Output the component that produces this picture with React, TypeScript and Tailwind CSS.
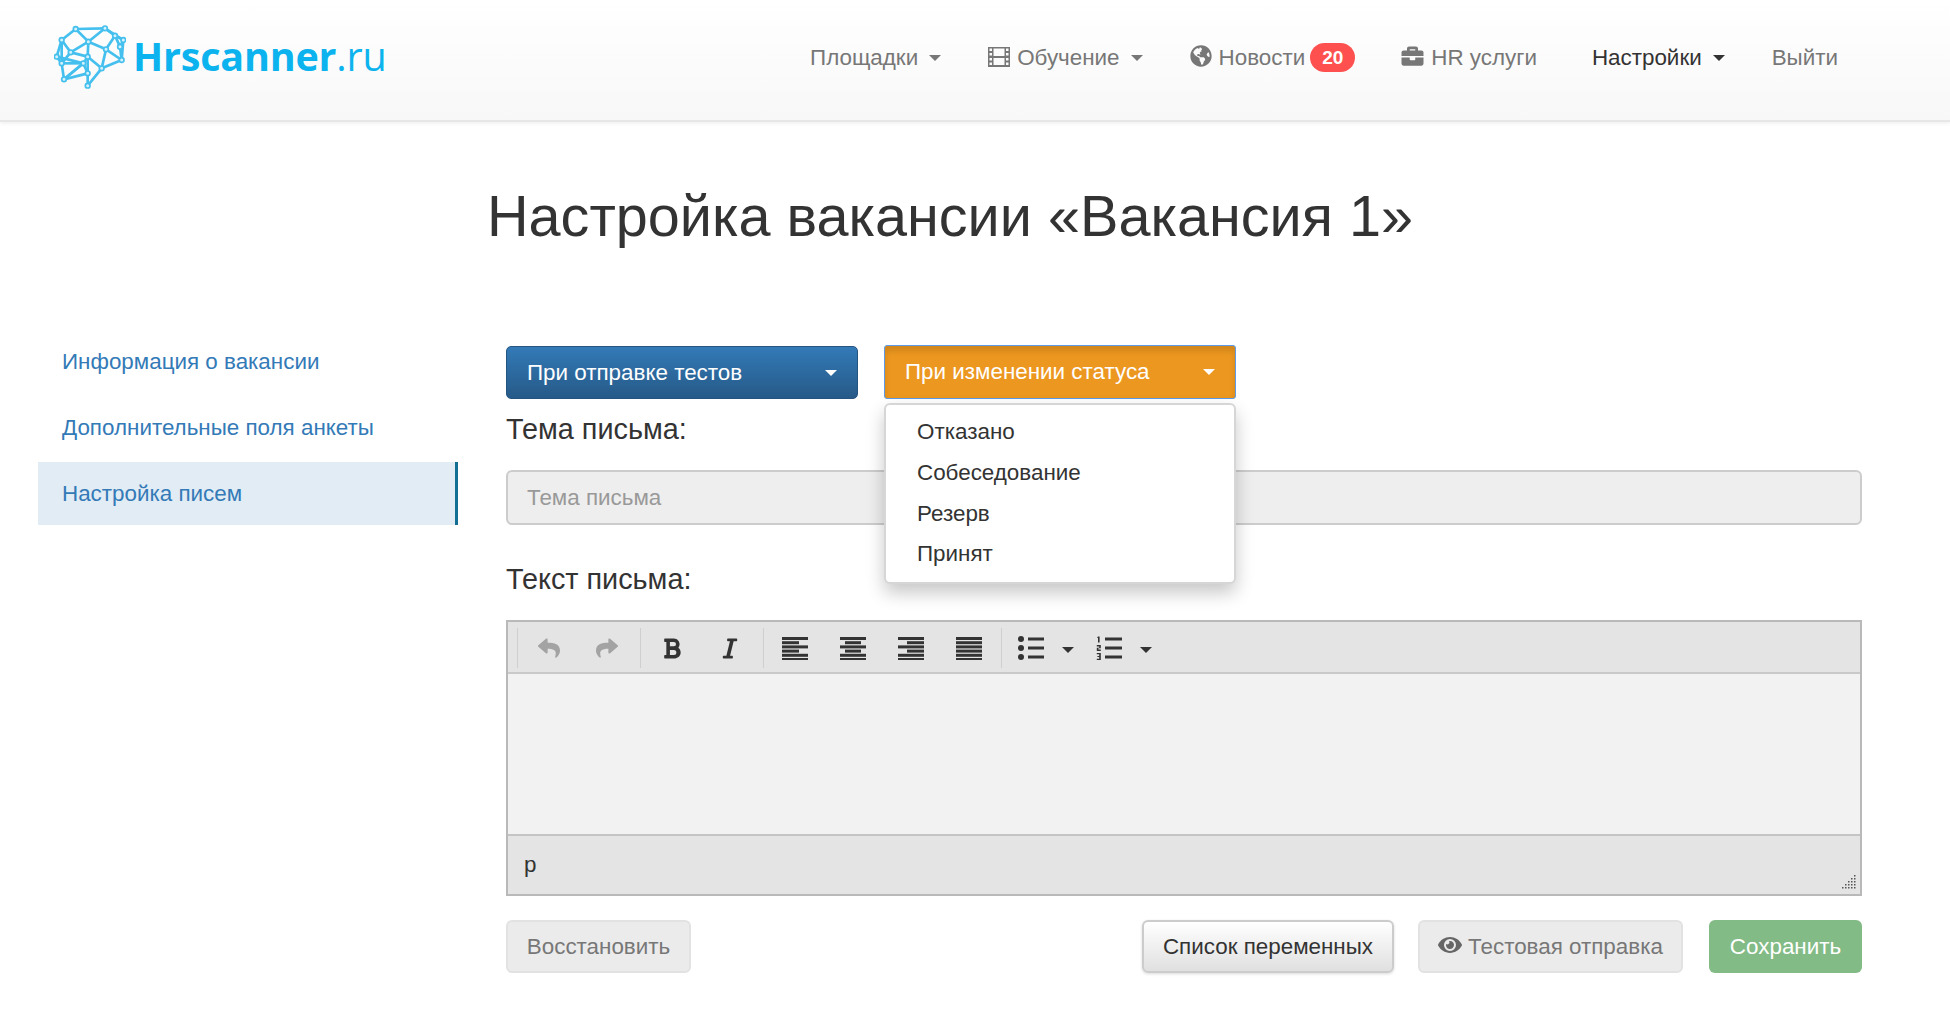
import { FaBold, FaBriefcase, FaEye, FaGlobeAmericas, FaItalic, FaReply, FaShare } from 'react-icons/fa';

const font = "font-['Liberation_Sans',Arial,sans-serif]";

const brainNodes: [number, number][] = [
  [107, 52], [195, 50], [250, 85], [65, 85], [145, 90], [225, 72], [198, 113], [92, 122], [50, 135],
  [143, 135], [245, 145], [65, 155], [130, 155], [185, 170], [72, 203], [143, 185], [143, 222], [240, 105]
];

const brainEdges: [number, number][] = [
  [0, 1], [0, 3], [0, 4], [1, 4], [1, 5], [5, 2], [1, 2], [2, 17], [17, 10], [5, 6], [4, 6], [6, 10], [6, 13],
  [4, 9], [4, 7], [3, 7], [3, 8], [8, 11], [7, 11], [7, 9], [9, 12], [11, 12], [8, 12], [11, 14], [12, 14],
  [14, 15], [12, 15], [9, 15], [9, 13], [13, 10], [13, 16], [15, 16], [5, 17], [2, 10], [3, 11], [14, 12]
];

const Logo = () => (
  <div className="mb-[3px] flex items-center">
    <svg viewBox="42 40 216 192" className="h-[64px] w-[72px]" fill="none">
      {brainEdges.map(([a, b]) => (
        <line
          key={`${a}-${b}`}
          x1={brainNodes[a][0]}
          y1={brainNodes[a][1]}
          x2={brainNodes[b][0]}
          y2={brainNodes[b][1]}
          stroke="#45c0ee"
          strokeWidth="8"
        />
      ))}
      {brainNodes.map(([x, y]) => (
        <circle key={`${x}-${y}`} cx={x} cy={y} r="7" fill="#d5f1fb" stroke="#45c0ee" strokeWidth="5" />
      ))}
    </svg>
    <span className="ml-[7px] font-['Open_Sans',sans-serif] text-[39.5px] leading-none tracking-[-0.2px] text-[#0cb3ee]">
      <span className="font-bold">Hrscanner</span>.ru
    </span>
  </div>
);

const Caret = ({ className }: { className: string }) => (
  <span className={`inline-block h-0 w-0 border-x-[6px] border-t-[6px] border-x-transparent ${className}`} />
);

const FilmIcon = () => (
  <svg viewBox="0 0 22 20" className="mb-[2px] h-[20px] w-[22px] fill-[#777]">
    <path
      fillRule="evenodd"
      d="M0 0h22v20H0zM1.5 1.5v2.5h2.5V1.5zM18 1.5v2.5h2.5V1.5zM1.5 6v2.5h2.5V6zM18 6v2.5h2.5V6zM1.5 11v2.5h2.5V11zM18 11v2.5h2.5V11zM1.5 15.5V18h2.5v-2.5zM18 15.5V18h2.5v-2.5zM5.5 1.5V9h11V1.5zM5.5 11v7h11v-7z"
    />
  </svg>
);

const AlignIcon = ({ rows }: { rows: [number, number][] }) => (
  <svg viewBox="0 0 26 24" className="h-[24px] w-[26px] fill-[#333]">
    {rows.map(([x, w], i) => (
      <rect key={i} x={x} y={i * 4.2 + 1} width={w} height="3" />
    ))}
  </svg>
);

const BulletIcon = () => (
  <svg viewBox="0 0 26 24" className="h-[24px] w-[26px] fill-[#333]">
    <circle cx="3" cy="3" r="3" />
    <circle cx="3" cy="12" r="3" />
    <circle cx="3" cy="21" r="3" />
    <rect x="10" y="1.5" width="16" height="3" />
    <rect x="10" y="10.5" width="16" height="3" />
    <rect x="10" y="19.5" width="16" height="3" />
  </svg>
);

const NumberedIcon = () => (
  <svg viewBox="0 0 26 24" className="h-[24px] w-[26px] fill-[#333]">
    <path d="M2 0.5h1.6v6H2V2H1zM0.8 9h4v3.2H2.4v1.4h2.4V15H0.8v-3.2h2.4v-1.4H0.8zM0.8 17h4v7h-4v-1.3h2.4v-1.6H1.4v-1.2h1.8v-1.6H0.8z" />
    <rect x="9" y="1.5" width="17" height="3" />
    <rect x="9" y="10.5" width="17" height="3" />
    <rect x="9" y="19.5" width="17" height="3" />
  </svg>
);

const Separator = () => <div className="h-[40px] w-px bg-[#cfcfcf]" />;

const ToolButton = ({ children }: { children: React.ReactNode }) => (
  <div className="flex w-[58px] items-center justify-center">{children}</div>
);

const ResizeHandle = () => (
  <svg viewBox="0 0 16 16" className="absolute right-[4px] bottom-[4px] h-[16px] w-[16px] fill-[#555]">
    {[[14, 1], [14, 4], [11, 4], [14, 7], [11, 7], [8, 7], [14, 10], [11, 10], [8, 10], [5, 10], [14, 13], [11, 13], [8, 13], [5, 13], [2, 13]].map(([x, y]) => (
      <rect key={`${x}-${y}`} x={x} y={y} width="1.5" height="1.5" />
    ))}
  </svg>
);

const Navbar = () => (
  <header className="flex h-[122px] items-center justify-between border-b-2 border-[#e7e7e7] bg-gradient-to-b from-white to-[#f8f8f8] pr-[112px] pb-[4px] pl-[54px] shadow-[0_1px_4px_rgba(0,0,0,0.08)]">
    <Logo />
    <nav className="flex items-center text-[22.4px] text-[#777]">
      <span className="flex items-center">
        Площадки
        <Caret className="ml-[11px] border-t-[#777]" />
      </span>
      <span className="ml-[47px] flex items-center">
        <FilmIcon />
        <span className="ml-[7px]">Обучение</span>
        <Caret className="ml-[11px] border-t-[#777]" />
      </span>
      <span className="ml-[47px] flex items-center">
        <FaGlobeAmericas className="mb-[4px] h-[22px] w-[22px]" />
        <span className="ml-[7px]">Новости</span>
        <span className="ml-[5px] flex h-[29px] w-[45px] items-center justify-center rounded-full bg-[#ff5050] text-[19px] font-bold text-white">
          20
        </span>
      </span>
      <span className="ml-[46px] flex items-center">
        <FaBriefcase className="mb-[4px] h-[22px] w-[23px]" />
        <span className="ml-[7px]">HR услуги</span>
      </span>
      <span className="ml-[55px] flex items-center text-[#333]">
        Настройки
        <Caret className="ml-[11px] border-t-[#333]" />
      </span>
      <span className="ml-[47px]">Выйти</span>
    </nav>
  </header>
);

const Sidebar = () => (
  <aside className="ml-[38px] flex w-[420px] shrink-0 flex-col gap-[3px] text-[22.4px] text-[#337ab7]">
    <div className="flex h-[63px] items-center pl-[24px]">Информация о вакансии</div>
    <div className="flex h-[63px] items-center pl-[24px]">Дополнительные поля анкеты</div>
    <div className="flex h-[63px] items-center border-r-[3px] border-[#126f93] bg-[#e2ecf5] pl-[24px]">Настройка писем</div>
  </aside>
);

const Editor = () => (
  <div className="mt-[25px] flex h-[276px] flex-col border-2 border-[#b9b9b9] bg-[#e4e4e4]">
    <div className="flex h-[52px] shrink-0 items-center border-b-2 border-[#c9c9c9] pt-[2px] pl-[9px]">
      <Separator />
      <div className="ml-[2px] flex">
        <ToolButton><FaReply className="h-[22px] w-[24px] text-[#a3a3a3]" /></ToolButton>
        <ToolButton><FaShare className="h-[22px] w-[24px] text-[#a3a3a3]" /></ToolButton>
      </div>
      <div className="ml-[4px]"><Separator /></div>
      <div className="ml-[2px] flex">
        <ToolButton><FaBold className="h-[23px] w-[20px] text-[#333]" /></ToolButton>
        <ToolButton><FaItalic className="h-[23px] w-[20px] text-[#333]" /></ToolButton>
      </div>
      <div className="ml-[4px]"><Separator /></div>
      <div className="ml-[2px] flex">
        <ToolButton><AlignIcon rows={[[0, 26], [0, 17], [0, 26], [0, 17], [0, 26], [0, 26]]} /></ToolButton>
        <ToolButton><AlignIcon rows={[[0, 26], [5, 16], [0, 26], [5, 16], [0, 26], [0, 26]]} /></ToolButton>
        <ToolButton><AlignIcon rows={[[0, 26], [9, 17], [0, 26], [9, 17], [0, 26], [0, 26]]} /></ToolButton>
        <ToolButton><AlignIcon rows={[[0, 26], [0, 26], [0, 26], [0, 26], [0, 26], [0, 26]]} /></ToolButton>
      </div>
      <div className="ml-[3px]"><Separator /></div>
      <div className="ml-[16px]"><BulletIcon /></div>
      <Caret className="mt-[4px] ml-[18px] border-t-[#333]" />
      <div className="ml-[22px]"><NumberedIcon /></div>
      <Caret className="mt-[4px] ml-[18px] border-t-[#333]" />
    </div>
    <div className="h-[160px] shrink-0 bg-[#f2f2f2]" />
    <div className="relative flex flex-1 items-center border-t-2 border-[#c4c4c4] pl-[16px] text-[22.4px] text-[#333]">
      p
      <ResizeHandle />
    </div>
  </div>
);

const StatusDropdown = () => (
  <div className="absolute top-[73px] left-[378px] z-10 flex h-[181px] w-[352px] flex-col justify-center rounded-[6px] border-2 border-[#d6d6d6] bg-white pl-[31px] text-[22.4px] leading-[40.7px] text-[#333] shadow-[0_9px_18px_rgba(0,0,0,0.22)]">
    <div>Отказано</div>
    <div>Собеседование</div>
    <div>Резерв</div>
    <div>Принят</div>
  </div>
);

const Content = () => (
  <section className="relative ml-[48px] w-[1356px] pt-[16px] text-[#333]">
    <div className="flex items-start">
      <div className="flex h-[53px] w-[352px] items-center justify-between rounded-[5px] border border-[#245580] bg-gradient-to-b from-[#337ab7] to-[#265a88] px-[20px] text-[22.4px] text-white">
        При отправке тестов
        <Caret className="border-t-white" />
      </div>
      <div className="-mt-px ml-[26px] flex h-[54px] w-[352px] items-center justify-between rounded-[3px] border border-[#5b9bea] bg-[#ec971f] px-[20px] text-[22.4px] text-white shadow-[inset_0_5px_6px_rgba(0,0,0,0.12)]">
        При изменении статуса
        <Caret className="border-t-white" />
      </div>
    </div>
    <StatusDropdown />
    <div className="mt-[14px] text-[28.8px] leading-[32px]">Тема письма:</div>
    <div className="mt-[25px] flex h-[55px] items-center rounded-[6px] border-2 border-[#ccc] bg-[#eee] pl-[19px] text-[22.4px] text-[#999]">
      Тема письма
    </div>
    <div className="mt-[38px] text-[28.8px] leading-[32px]">Текст письма:</div>
    <Editor />
    <div className="mt-[24px] flex h-[53px] text-[22.4px]">
      <div className="flex w-[185px] items-center justify-center rounded-[6px] border-2 border-[#e2e2e2] bg-[#ebebeb] text-[#777]">
        Восстановить
      </div>
      <div className="ml-auto flex w-[252px] items-center justify-center rounded-[6px] border-2 border-[#ccc] bg-gradient-to-b from-white to-[#e0e0e0] text-[#333] shadow-[0_1px_3px_rgba(0,0,0,0.15)]">
        Список переменных
      </div>
      <div className="ml-[24px] flex w-[265px] items-center justify-center rounded-[6px] border-2 border-[#e2e2e2] bg-[#ebebeb] text-[#777]">
        <FaEye className="mr-[6px] mb-[4px] h-[22px] w-[24px] text-[#666]" />
        Тестовая отправка
      </div>
      <div className="ml-[26px] flex w-[153px] items-center justify-center rounded-[6px] bg-[#82bb85] text-white">
        Сохранить
      </div>
    </div>
  </section>
);

export default function App() {
  return (
    <div className={`min-h-[1012px] w-[1950px] overflow-hidden bg-white ${font}`}>
      <Navbar />
      <h1 className="mt-[58px] ml-[487px] text-[57.6px] leading-[72px] text-[#333]">Настройка вакансии «Вакансия 1»</h1>
      <main className="mt-[78px] flex">
        <Sidebar />
        <Content />
      </main>
    </div>
  );
}
